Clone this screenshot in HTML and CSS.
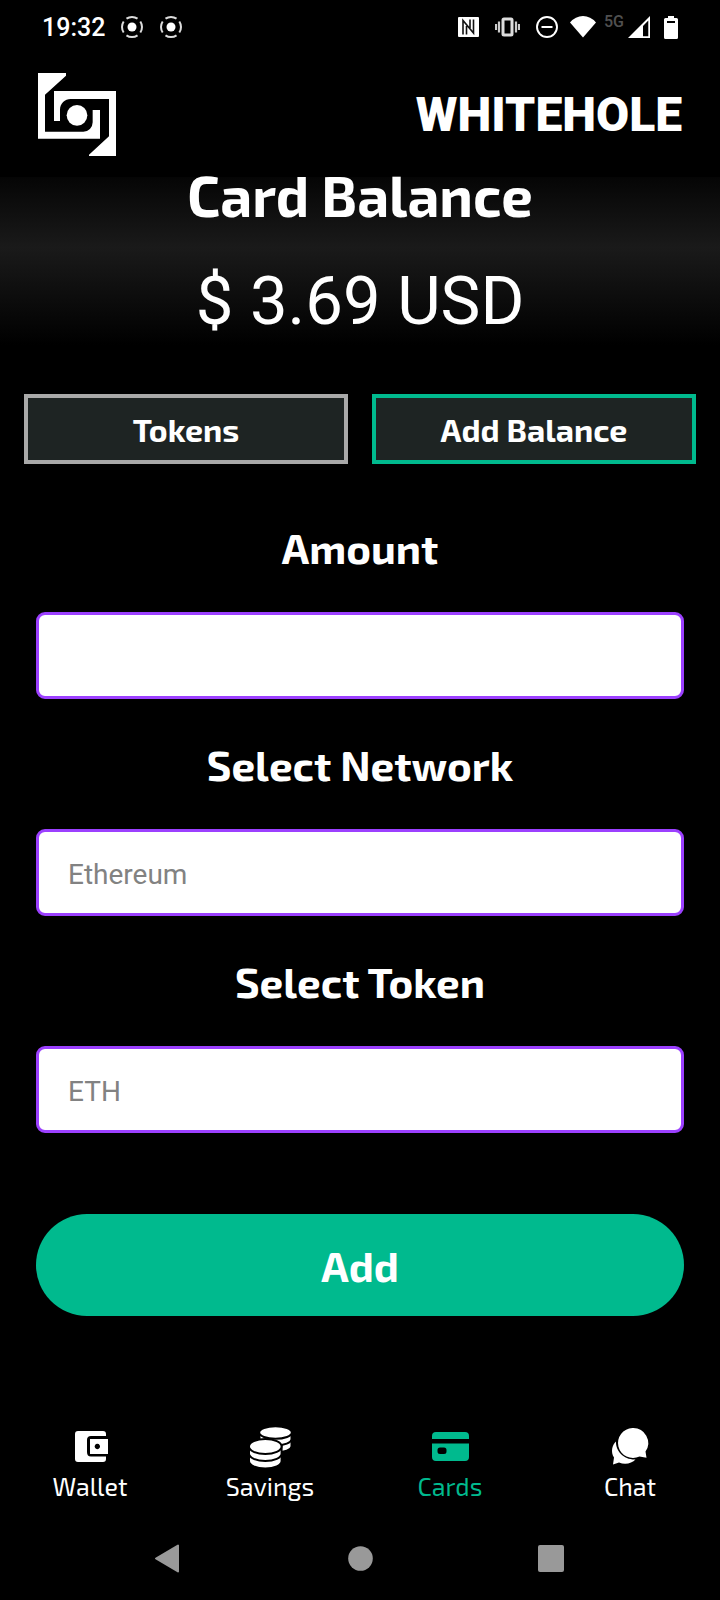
FILE: index.html
```html
<!DOCTYPE html>
<html lang="en">
<head>
<meta charset="utf-8">
<meta name="viewport" content="width=device-width, initial-scale=1">
<title>Whitehole</title>
<link rel="stylesheet" href="styles.css">
</head>
<body>
<div class="app">
  <div class="status">
    <div class="status-left">
      <span class="clock">19:32</span>
      <svg width="24" height="24" viewBox="0 0 24 24"><circle cx="12" cy="12" r="4.500" fill="#fff"/><circle cx="12" cy="12" r="10" fill="none" stroke="#ddd" stroke-width="2" pathLength="80" stroke-dasharray="15 5" stroke-dashoffset="7.500"/></svg>
      <svg width="24" height="24" viewBox="0 0 24 24"><circle cx="12" cy="12" r="4.500" fill="#fff"/><circle cx="12" cy="12" r="10" fill="none" stroke="#ddd" stroke-width="2" pathLength="80" stroke-dasharray="15 5" stroke-dashoffset="7.500"/></svg>
    </div>
    <div class="status-right">
      <svg class="nfc" width="21" height="22" viewBox="0 0 21 22"><rect y="1" width="21" height="20" rx="1" fill="#fff"/><path d="M5 18.500V4.500L15.500 17V3.500M8.500 18.500V10M12 3.500V12" fill="none" stroke="#111" stroke-width="1.600"/></svg>
      <svg class="vibrate" width="25" height="22" viewBox="0 0 25 22"><rect x="8" y="3" width="9" height="16" rx="1" fill="none" stroke="#ddd" stroke-width="3"/><path d="M1 8v6M4 5.500v11M21 5.500v11M24 8v6" stroke="#ccc" stroke-width="2.200"/></svg>
      <svg class="dnd" width="22" height="22" viewBox="0 0 22 22"><circle cx="11" cy="11" r="10" fill="none" stroke="#fff" stroke-width="1.900"/><path d="M5.500 11h11" stroke="#fff" stroke-width="2"/></svg>
      <svg class="wifi" width="26" height="22" viewBox="0 0 26 22"><path d="M0 6.500Q5.500 0 13 0T26 6.500L13 21.500Z" fill="#fff"/></svg>
      <span class="net">5G</span>
      <svg class="signal" width="22" height="22" viewBox="0 0 22 22"><path fill="#fff" fill-rule="evenodd" d="M0 22L22 0V22ZM15 10V20.300H20.300V4.500Z"/></svg>
      <svg width="14" height="23" viewBox="0 0 14 23"><path fill="#fff" fill-rule="evenodd" d="M4 0h6v2h2.500q1.500 0 1.500 1.500V21.500q0 1.500-1.500 1.500h-11Q0 23 0 21.500V3.500Q0 2 1.500 2H4ZM3 5v2h8V5Z"/></svg>
    </div>
  </div>

  <header class="brand">
    <svg width="78" height="83" viewBox="114 219 234 249" fill="#fff" role="img" aria-label="Whitehole logo"><path d="M114 219H198V227L135 284V395H250A28 28 0 0 0 278 367V330H300V416H114Z"/><path d="M348 468H267V464L327 409V297H212A32 32 0 0 0 180 329V363H162V273H348Z"/><circle cx="231" cy="346" r="31"/></svg>
    <span class="wordmark">WHITEHOLE</span>
  </header>

  <section class="balance">
    <h1 class="balance-title">Card Balance</h1>
    <p class="balance-value">$ 3.69 USD</p>
  </section>

  <div class="tabs">
    <button class="tab" type="button">Tokens</button>
    <button class="tab tab-active" type="button">Add Balance</button>
  </div>

  <form class="form">
    <label class="label" for="amount">Amount</label>
    <input class="field" id="amount" type="text" inputmode="decimal">
    <label class="label" for="network">Select Network</label>
    <select class="field" id="network"><option>Ethereum</option></select>
    <label class="label" for="token">Select Token</label>
    <select class="field" id="token"><option>ETH</option></select>
    <button class="submit" type="button">Add</button>
  </form>

  <nav class="nav">
    <a class="nav-item" href="#wallet">
      <svg width="42" height="42" viewBox="0 0 42 42"><path fill="#fff" d="M9 5H34Q37 5 37 8V10H22Q18 10 18 14V26Q18 30.500 22 30.500H37V33Q37 36 34 36H9Q6 36 6 33V8Q6 5 9 5Z"/><path fill="#fff" fill-rule="evenodd" d="M21 13H39V28H21ZM28.300 17.800a2.700 2.700 0 1 0 .1 0Z"/></svg>
      <span>Wallet</span>
    </a>
    <a class="nav-item" href="#savings">
      <svg width="42" height="42" viewBox="0 0 42 42"><g fill="#fff" stroke="#000" stroke-width="2"><path d="M10.500 14V20A16 6.500 0 0 0 42.500 20V14Z"/><path d="M10.500 7V13A16 6.500 0 0 0 42.500 13V7Z"/><ellipse cx="26.500" cy="6.500" rx="16.300" ry="6.300"/><path d="M0 28V35A16.300 7.500 0 0 0 32.600 35V28Z"/><path d="M0 20V27.500A16.300 7.500 0 0 0 32.600 27.500V20Z"/><ellipse cx="16.300" cy="20.500" rx="16.300" ry="7.500"/></g></svg>
      <span>Savings</span>
    </a>
    <a class="nav-item nav-active" href="#cards">
      <svg width="42" height="42" viewBox="0 0 42 42"><path fill="#00ba8e" d="M7 6H36Q40 6 40 10V13H3V10Q3 6 7 6Z"/><path fill="#00ba8e" fill-rule="evenodd" d="M3 17.500H40V31Q40 35 36 35H7Q3 35 3 31ZM11 21.500Q8.500 21.500 8.500 24V25.500Q8.500 28 11 28H15Q17.500 28 17.500 25.500V24Q17.500 21.500 15 21.500Z"/></svg>
      <span>Cards</span>
    </a>
    <a class="nav-item" href="#chat">
      <svg width="42" height="42" viewBox="0 0 42 42"><path fill="#fff" d="M7 15.500C3 19 1.500 26 5 31.500Q4.500 35 4 38.500L10 36.500C16 39 23 37.500 26.500 33.500C15 34 6.500 25 7 15.500Z"/><path fill="#fff" d="M23.500 2A15 15 0 1 0 30.500 30.500L37.500 31.800L36.500 25.500A15 15 0 0 0 23.500 2Z"/></svg>
      <span>Chat</span>
    </a>
  </nav>

  <div class="system">
    <button class="sys-btn" type="button" aria-label="Back"><svg width="30" height="30" viewBox="0 0 30 30"><path d="M3 15.500L25 2.500V28.500Z" fill="#999" stroke="#999" stroke-width="2" stroke-linejoin="round"/></svg></button>
    <button class="sys-btn" type="button" aria-label="Home"><svg width="30" height="30" viewBox="0 0 30 30"><circle cx="15.500" cy="15.500" r="12.300" fill="#999"/></svg></button>
    <button class="sys-btn" type="button" aria-label="Recents"><svg width="30" height="30" viewBox="0 0 30 30"><rect x="1" y="2" width="26" height="27" rx="2" fill="#999"/></svg></button>
  </div>
</div>
</body>
</html>
```
FILE: styles.css
```css
* { box-sizing: border-box; }
body {
  margin: 0;
  background: #000;
  color: #fff;
  font-family: "Exo 2", "Noto Sans", sans-serif;
}
svg { display: block; flex: none; }
button, input, select { font-family: inherit; }
.app {
  display: flex;
  flex-direction: column;
  min-height: 100vh;
}
.status {
  display: flex;
  justify-content: space-between;
  align-items: center;
  height: 54px;
  padding: 0 42px;
  font-family: Roboto, sans-serif;
}
.status-left, .status-right {
  display: flex;
  align-items: center;
}
.status-left { gap: 15px; }
.clock { font-size: 25px; font-weight: 500; }
.nfc, .vibrate { margin-right: 16px; }
.dnd { margin-right: 12px; }
.wifi { margin-right: 8px; }
.net {
  margin-right: 4px;
  padding-bottom: 10px;
  color: #505050;
  font-size: 16px;
  font-weight: 500;
  line-height: 16px;
}
.signal { margin-right: 14px; }
.brand {
  display: flex;
  justify-content: space-between;
  align-items: center;
  padding: 19px 38px 21px;
}
.wordmark {
  font-family: Roboto, sans-serif;
  font-size: 48px;
  font-weight: 900;
  line-height: 56px;
}
.balance {
  height: 168px;
  background: linear-gradient(#050505, #1a1a1a 42%, #000);
  text-align: center;
}
.balance-title {
  margin: 0;
  font-size: 56px;
  font-weight: 700;
  line-height: 36px;
}
.balance-value {
  margin: 48px 0 0;
  font-family: Roboto, sans-serif;
  font-size: 67px;
  line-height: 80px;
}
.tabs {
  display: grid;
  grid-template-columns: 1fr 1fr;
  gap: 24px;
  margin-top: 49px;
  padding: 0 24px;
}
.tab {
  height: 70px;
  padding: 0;
  border: 4px solid #a9a9a9;
  background: #1e2423;
  color: #fff;
  font-size: 32px;
  font-weight: 700;
}
.tab-active { border-color: #00ba8e; }
.form {
  display: flex;
  flex-direction: column;
  padding: 18px 36px 0;
}
.label {
  height: 130px;
  padding-top: 37px;
  font-size: 42px;
  font-weight: 700;
  line-height: 56px;
  text-align: center;
}
.field {
  width: 100%;
  height: 87px;
  padding: 4px 29px 0;
  border: 3px solid #9c40ff;
  border-radius: 9px;
  appearance: none;
  background: #fff;
  color: #828282;
  font-family: Roboto, sans-serif;
  font-size: 28px;
}
.submit {
  height: 102px;
  margin-top: 81px;
  border: 0;
  border-radius: 51px;
  background: #00ba8e;
  color: #fff;
  font-size: 42px;
  font-weight: 700;
}
.nav {
  display: grid;
  grid-template-columns: repeat(4, 1fr);
  margin-top: 110px;
}
.nav-item {
  display: flex;
  flex-direction: column;
  align-items: center;
  color: #fff;
  font-size: 25px;
  line-height: 36px;
  text-decoration: none;
}
.nav-active { color: #00ba8e; }
.system {
  display: flex;
  justify-content: space-around;
  margin-top: 39px;
  padding: 0 72px;
}
.sys-btn {
  padding: 0;
  border: 0;
  background: none;
}
```
